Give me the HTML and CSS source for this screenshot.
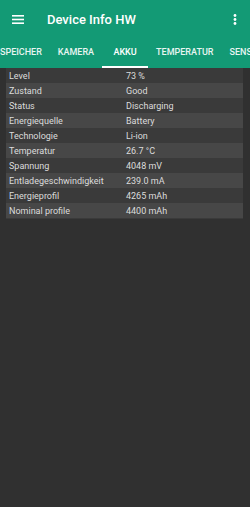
FILE: index.html
```html
<!DOCTYPE html>
<html lang="de">
<head>
  <meta charset="UTF-8" />
  <meta name="viewport" content="width=device-width, initial-scale=1.0" />
  <title>Device Info HW</title>
  <link rel="stylesheet" href="styles.css">
</head>
<body>
  <div class="appbar">
    <div class="toolbar">
      <svg class="menu" width="12" height="9" viewBox="0 0 12 9">
        <rect x="0" y="0" width="12" height="1.6" fill="#fff" />
        <rect x="0" y="3.7" width="12" height="1.6" fill="#fff" />
        <rect x="0" y="7.4" width="12" height="1.6" fill="#fff" />
      </svg>
      <div class="title">Device Info HW</div>
      <svg class="more" width="4" height="11" viewBox="0 0 4 11">
        <circle cx="2" cy="1.5" r="1.4" fill="#fff" />
        <circle cx="2" cy="5.5" r="1.4" fill="#fff" />
        <circle cx="2" cy="9.5" r="1.4" fill="#fff" />
      </svg>
    </div>
    <div class="tabs">
      <div class="tab">SPEICHER</div>
      <div class="tab">KAMERA</div>
      <div class="tab active">AKKU</div>
      <div class="tab">TEMPERATUR</div>
      <div class="tab">SENSOREN</div>
    </div>
  </div>

  <div class="info">
    <div class="row"><span class="key">Level</span><span class="val">73 %</span></div>
    <div class="row"><span class="key">Zustand</span><span class="val">Good</span></div>
    <div class="row"><span class="key">Status</span><span class="val">Discharging</span></div>
    <div class="row"><span class="key">Energiequelle</span><span class="val">Battery</span></div>
    <div class="row"><span class="key">Technologie</span><span class="val">Li-ion</span></div>
    <div class="row"><span class="key">Temperatur</span><span class="val">26.7 °C</span></div>
    <div class="row"><span class="key">Spannung</span><span class="val">4048 mV</span></div>
    <div class="row"><span class="key">Entladegeschwindigkeit</span><span class="val">239.0 mA</span></div>
    <div class="row"><span class="key">Energieprofil</span><span class="val">4265 mAh</span></div>
    <div class="row"><span class="key">Nominal profile</span><span class="val">4400 mAh</span></div>
  </div>
</body>
</html>
```

FILE: styles.css
```css
html, body {
  margin: 0;
  padding: 0;
  background: #303030;
  color: #fff;
  font-family: Roboto, "Noto Sans", sans-serif;
  height: 100vh;
  width: 100vw;
  overflow: hidden;
}

.appbar {
  background: #139a75;
}

.toolbar {
  height: 39px;
  display: flex;
  align-items: center;
  padding: 0 12px 0 12px;
  box-sizing: border-box;
}

.menu {
  flex: none;
}

.title {
  flex: 1;
  margin-left: 23px;
  font-size: 13px;
  font-weight: 500;
}

.more {
  flex: none;
  margin-right: 1px;
}

.tabs {
  display: flex;
  height: 29px;
  margin-left: -8px;
  white-space: nowrap;
  overflow: hidden;
}

.tab {
  flex: none;
  min-width: 46px;
  padding: 0 8px;
  box-sizing: border-box;
  text-align: center;
  font-size: 9px;
  font-weight: 500;
  line-height: 27px;
  border-bottom: 2px solid transparent;
  color: #e8f5f1;
}

.tab.active {
  color: #fff;
  border-bottom-color: #fff;
}

.info {
  margin: 0 7px 0 6px;
  padding: 0 0 1px;
  background: #3a3a3a;
}

.row {
  display: flex;
  height: 15px;
  align-items: center;
  font-size: 9px;
  color: #dcdcdc;
}

.row:nth-child(even) {
  background: #474747;
}

.key {
  width: 120px;
  padding-left: 3px;
  box-sizing: border-box;
}
```
